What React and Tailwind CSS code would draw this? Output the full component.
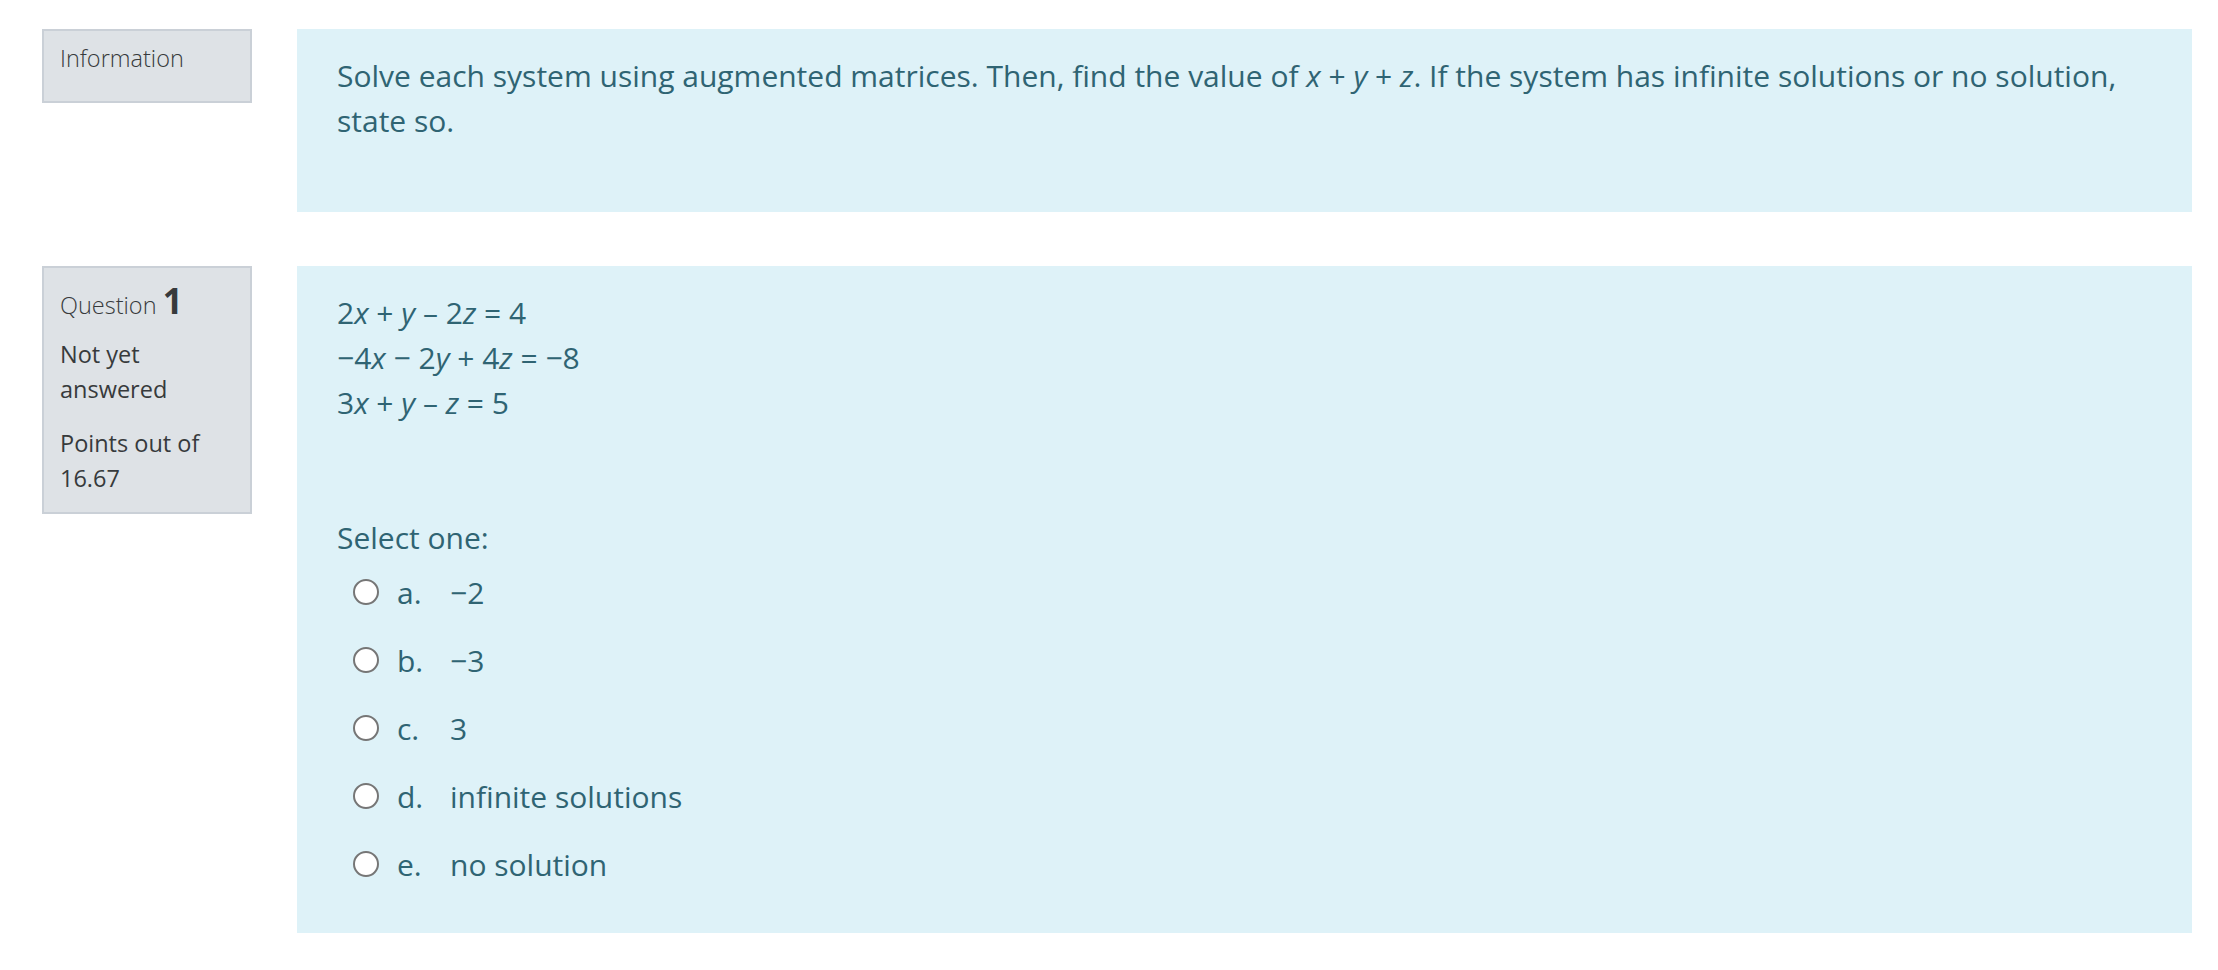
const OPTIONS = [
  { letter: 'a.', value: '−2' },
  { letter: 'b.', value: '−3' },
  { letter: 'c.', value: '3' },
  { letter: 'd.', value: 'infinite solutions' },
  { letter: 'e.', value: 'no solution' },
]

function InfoBox({ children, className = '' }) {
  return (
    <div className={`w-[210px] shrink-0 bg-[#dee2e6] border-2 border-[#cad0d7] pl-[16px] pr-[12px] text-[#373a3c] ${className}`}>
      {children}
    </div>
  )
}

export default function App() {
  return (
    <div className="min-h-screen bg-white pt-[29px] pl-[42px] pr-[26px] font-['Open_Sans',sans-serif]">
      {/* Information block */}
      <div className="flex items-start gap-[45px]">
        <InfoBox className="pt-[10px] pb-[25px]">
          <h3 className="text-[23.5px] leading-[35px] font-light">Information</h3>
        </InfoBox>
        <div className="flex-1 bg-[#def2f8] text-[#2f6473] pt-[24px] pb-[69px] px-[40px]">
          <p className="text-[30px] leading-[45px]">
            Solve each system using augmented matrices. Then, find the value of <i>x</i> + <i>y</i> + <i>z</i>. If the system has infinite solutions or no solution, state so.
          </p>
        </div>
      </div>

      {/* Question 1 */}
      <div className="flex items-start gap-[45px] mt-[54px]">
        <InfoBox className="pt-[15px] pb-[16px]">
          <h3 className="text-[23.5px] leading-[35px] font-light">
            Question <span className="text-[35px] leading-[35px] font-bold">1</span>
          </h3>
          <div className="mt-[14px] text-[23.5px] leading-[35px]">Not yet answered</div>
          <div className="mt-[19px] text-[23.5px] leading-[35px]">Points out of 16.67</div>
        </InfoBox>

        <div className="flex-1 bg-[#def2f8] text-[#2f6473] pt-[24px] pb-[35px] px-[40px]">
          <div className="text-[30px] leading-[45px]">
            <div>2<i>x</i> + <i>y</i> – 2<i>z</i> = 4</div>
            <div>−4<i>x</i> − 2<i>y</i> + 4<i>z</i> = −8</div>
            <div>3<i>x</i> + <i>y</i> – <i>z</i> = 5</div>
          </div>

          <div className="mt-[93px] text-[30px] leading-[40px]">Select one:</div>

          <div className="text-[30px] leading-[45px]">
            {OPTIONS.map(o => (
              <label key={o.letter} className="flex items-center h-[68px] pl-[16px] cursor-pointer">
                <span className="w-[26px] h-[26px] rounded-full border-2 border-[#767676] bg-white shrink-0" />
                <span className="ml-[18px] w-[53px] shrink-0">{o.letter}</span>
                <span>{o.value}</span>
              </label>
            ))}
          </div>
        </div>
      </div>
    </div>
  )
}
